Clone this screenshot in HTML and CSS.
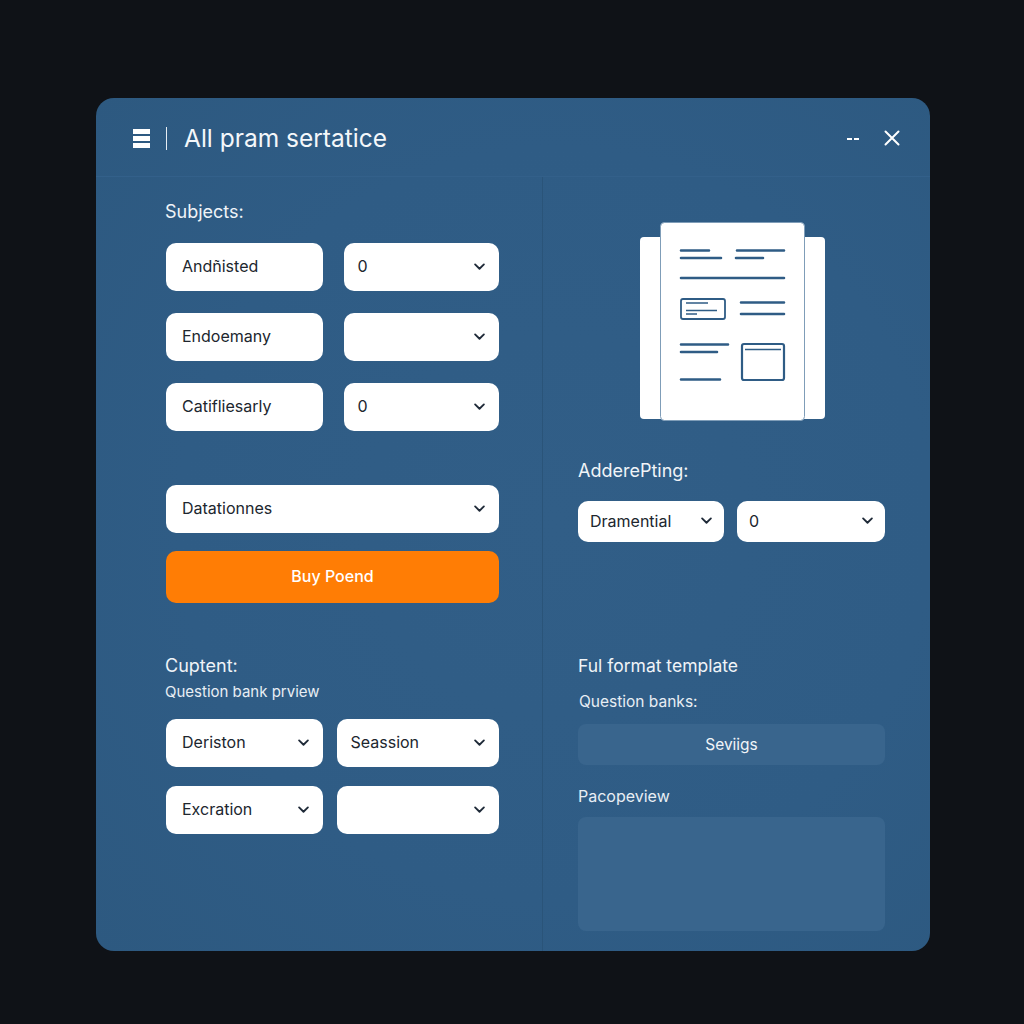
FILE: index.html
```html
<!DOCTYPE html>
<html lang="en">
<head>
  <meta charset="UTF-8" />
  <title>All pram sertatice</title>
  <link rel="stylesheet" href="styles.css">
</head>
<body>
  <svg class="sprite" width="0" height="0">
    <symbol id="chev" viewBox="0 0 12 8">
      <path d="M1.2 1.4 6 6.2l4.8-4.8" fill="none" stroke="currentColor" stroke-width="2" stroke-linecap="round" stroke-linejoin="round" />
    </symbol>
  </svg>

  <div class="window">
    <header class="titlebar">
      <div class="menuIcon"><span></span><span></span><span></span></div>
      <div class="titleSep"></div>
      <h1>All pram sertatice</h1>
      <div class="winControls">
        <div class="dashes"><span></span><span></span></div>
        <svg class="closeIcon" width="16" height="16" viewBox="0 0 16 16">
          <path d="M1.5 1.5l13 13M14.5 1.5l-13 13" stroke="#fff" stroke-width="2" stroke-linecap="round" />
        </svg>
      </div>
    </header>

    <div class="panes">
      <section class="pane paneLeft">
        <div class="heading subjectsHead">Subjects:</div>
        <div class="row subjectRow">
          <div class="field plain w157"><span>Andñisted</span></div>
          <div class="field w155 tight"><span>0</span><svg class="chev"><use href="#chev" /></svg></div>
        </div>
        <div class="row subjectRow">
          <div class="field plain w157"><span>Endoemany</span></div>
          <div class="field w155 tight"><span></span><svg class="chev"><use href="#chev" /></svg></div>
        </div>
        <div class="row subjectRow">
          <div class="field plain w157"><span>Catifliesarly</span></div>
          <div class="field w155 tight"><span>0</span><svg class="chev"><use href="#chev" /></svg></div>
        </div>

        <div class="field wide"><span>Datationnes</span><svg class="chev"><use href="#chev" /></svg></div>
        <button class="buyBtn">Buy Poend</button>

        <div class="heading contentHead">Cuptent:</div>
        <div class="subLabel bankPreview">Question bank prview</div>
        <div class="row contentRow">
          <div class="field w157"><span>Deriston</span><svg class="chev"><use href="#chev" /></svg></div>
          <div class="field w162 tight"><span>Seassion</span><svg class="chev"><use href="#chev" /></svg></div>
        </div>
        <div class="row contentRow">
          <div class="field w157"><span>Excration</span><svg class="chev"><use href="#chev" /></svg></div>
          <div class="field w162 tight"><span></span><svg class="chev"><use href="#chev" /></svg></div>
        </div>
      </section>

      <section class="pane paneRight">
        <svg class="docArt" width="185" height="199" viewBox="0 0 185 199">
          <rect x="0" y="15" width="185" height="182" rx="4" fill="#fff" />
          <rect x="20.500" y="0.500" width="144" height="198" rx="4" fill="#fff" stroke="#7f9db8" stroke-width="1" />
          <g fill="none" stroke="#2f5c85" stroke-width="2.6" stroke-linecap="round">
            <path d="M41 28.5h28M41 36h40M97 28.5h47M96 36h27M41 56h103" />
            <path d="M101 80.5h43M101 92h43M41 122.5h47M41 130h36M41 157.5h39" />
            <rect x="41" y="77" width="44" height="20" rx="2" stroke-width="1.8" />
            <rect x="102" y="122" width="42" height="36" rx="2" stroke-width="2.2" />
          </g>
          <path d="M46 81h22M46 88.500h31M46 92h11M105 127.500h36" fill="none" stroke="#2f5c85" stroke-width="1.4" />
        </svg>

        <div class="heading addHead">AdderePting:</div>
        <div class="row addRow">
          <div class="field small w146"><span>Dramential</span><svg class="chev"><use href="#chev" /></svg></div>
          <div class="field small w148"><span>0</span><svg class="chev"><use href="#chev" /></svg></div>
        </div>

        <div class="heading formatHead">Ful format template</div>
        <div class="subLabel banksLabel">Question banks:</div>
        <div class="softBox savings">Seviigs</div>
        <div class="subLabel previewLabel">Pacopeview</div>
        <div class="softBox previewBox"></div>
      </section>
    </div>
  </div>
</body>
</html>
```

FILE: styles.css
```css
body, html {
  margin: 0;
  padding: 0;
  height: 100%;
  background: #0f1217;
  font-family: 'Inter', 'Liberation Sans', sans-serif;
  color: #fff;
  overflow: hidden;
}

.sprite {
  display: block;
  height: 0;
}

.window {
  display: flex;
  flex-direction: column;
  width: 834px;
  height: 853px;
  margin: 98px 0 0 96px;
  border-radius: 18px;
  background: radial-gradient(circle at 55% 50%, #315e87 0%, #2f5c85 60%, #2d5980 100%);
  overflow: hidden;
}

.titlebar {
  display: flex;
  align-items: center;
  flex: none;
  height: 79px;
  padding: 2px 30px 0 37px;
  box-sizing: border-box;
  border-bottom: 1px solid #33608a;
}

.menuIcon {
  display: flex;
  flex-direction: column;
  gap: 2px;
  width: 17px;
}

.menuIcon span {
  height: 5px;
  background: #fff;
}

.titleSep {
  width: 1px;
  height: 23px;
  margin: 0 17px 0 16px;
  background: #e6edf3;
}

h1 {
  margin: 0;
  font-size: 24.5px;
  font-weight: 400;
  color: #f4f7fa;
}

.winControls {
  display: flex;
  align-items: center;
  margin-left: auto;
  gap: 25px;
}

.dashes {
  display: flex;
  gap: 2px;
  margin-top: 2px;
}

.dashes span {
  width: 5px;
  height: 2.500px;
  background: #fff;
}

.panes {
  display: flex;
  flex: 1;
}

.pane {
  display: flex;
  flex-direction: column;
  box-sizing: border-box;
}

.paneLeft {
  width: 447px;
  padding-left: 70px;
  border-right: 1px solid #2a5479;
}

.paneRight {
  flex: 1;
  padding-left: 35px;
}

.heading {
  font-size: 18px;
  line-height: 22px;
  color: #f0f4f8;
}

.subLabel {
  font-size: 15px;
  line-height: 20px;
  color: #e8eef4;
}

.row {
  display: flex;
}

.field {
  display: flex;
  align-items: center;
  justify-content: space-between;
  flex: none;
  box-sizing: border-box;
  height: 48px;
  padding: 0 14px 2px 16px;
  border-radius: 10px;
  background: #fff;
  color: #20262e;
  font-size: 16px;
}

.field.tight {
  padding-left: 13.500px;
}

.field.small {
  height: 41px;
  padding: 0 12px 2px 12px;
}

.chev {
  width: 11px;
  height: 7.500px;
  margin-top: 1px;
  color: #1f2a38;
}

.w146 { width: 146px; }
.w148 { width: 148px; }
.w155 { width: 155px; }
.w157 { width: 157px; }
.w162 { width: 162px; }

.subjectsHead {
  margin-top: 24px;
  margin-left: -1px;
}

.subjectRow {
  gap: 21px;
  margin-bottom: 22px;
}

.subjectsHead + .subjectRow {
  margin-top: 20px;
}

.wide {
  width: 333px;
  margin-top: 32px;
}

.buyBtn {
  display: block;
  width: 333px;
  height: 52px;
  margin-top: 18px;
  padding-bottom: 3px;
  border: none;
  border-radius: 10px;
  background: #ff7d05;
  color: #fff;
  font-family: inherit;
  font-size: 16px;
  font-weight: 500;
}

.contentHead {
  margin-top: 52px;
  margin-left: -1px;
}

.bankPreview {
  margin-top: 5px;
  margin-left: -1px;
}

.contentRow {
  gap: 14px;
  margin-bottom: 19px;
}

.bankPreview + .contentRow {
  margin-top: 17px;
}

.docArt {
  display: block;
  flex: none;
  margin: 45px 0 0 62px;
}

.addHead {
  margin-top: 39px;
}

.addRow {
  gap: 13px;
  margin-top: 19px;
}

.formatHead {
  margin-top: 113px;
  font-size: 17.5px;
}

.banksLabel {
  margin-top: 15px;
  margin-left: 1px;
  font-size: 15.5px;
}

.softBox {
  width: 307px;
  border-radius: 8px;
  background: #39658d;
}

.savings {
  display: flex;
  align-items: center;
  justify-content: center;
  height: 41px;
  margin-top: 12px;
  font-size: 15.500px;
  color: #f0f4f8;
}

.previewLabel {
  margin-top: 21px;
  font-size: 16px;
}

.previewBox {
  height: 114px;
  margin-top: 11px;
}
```
